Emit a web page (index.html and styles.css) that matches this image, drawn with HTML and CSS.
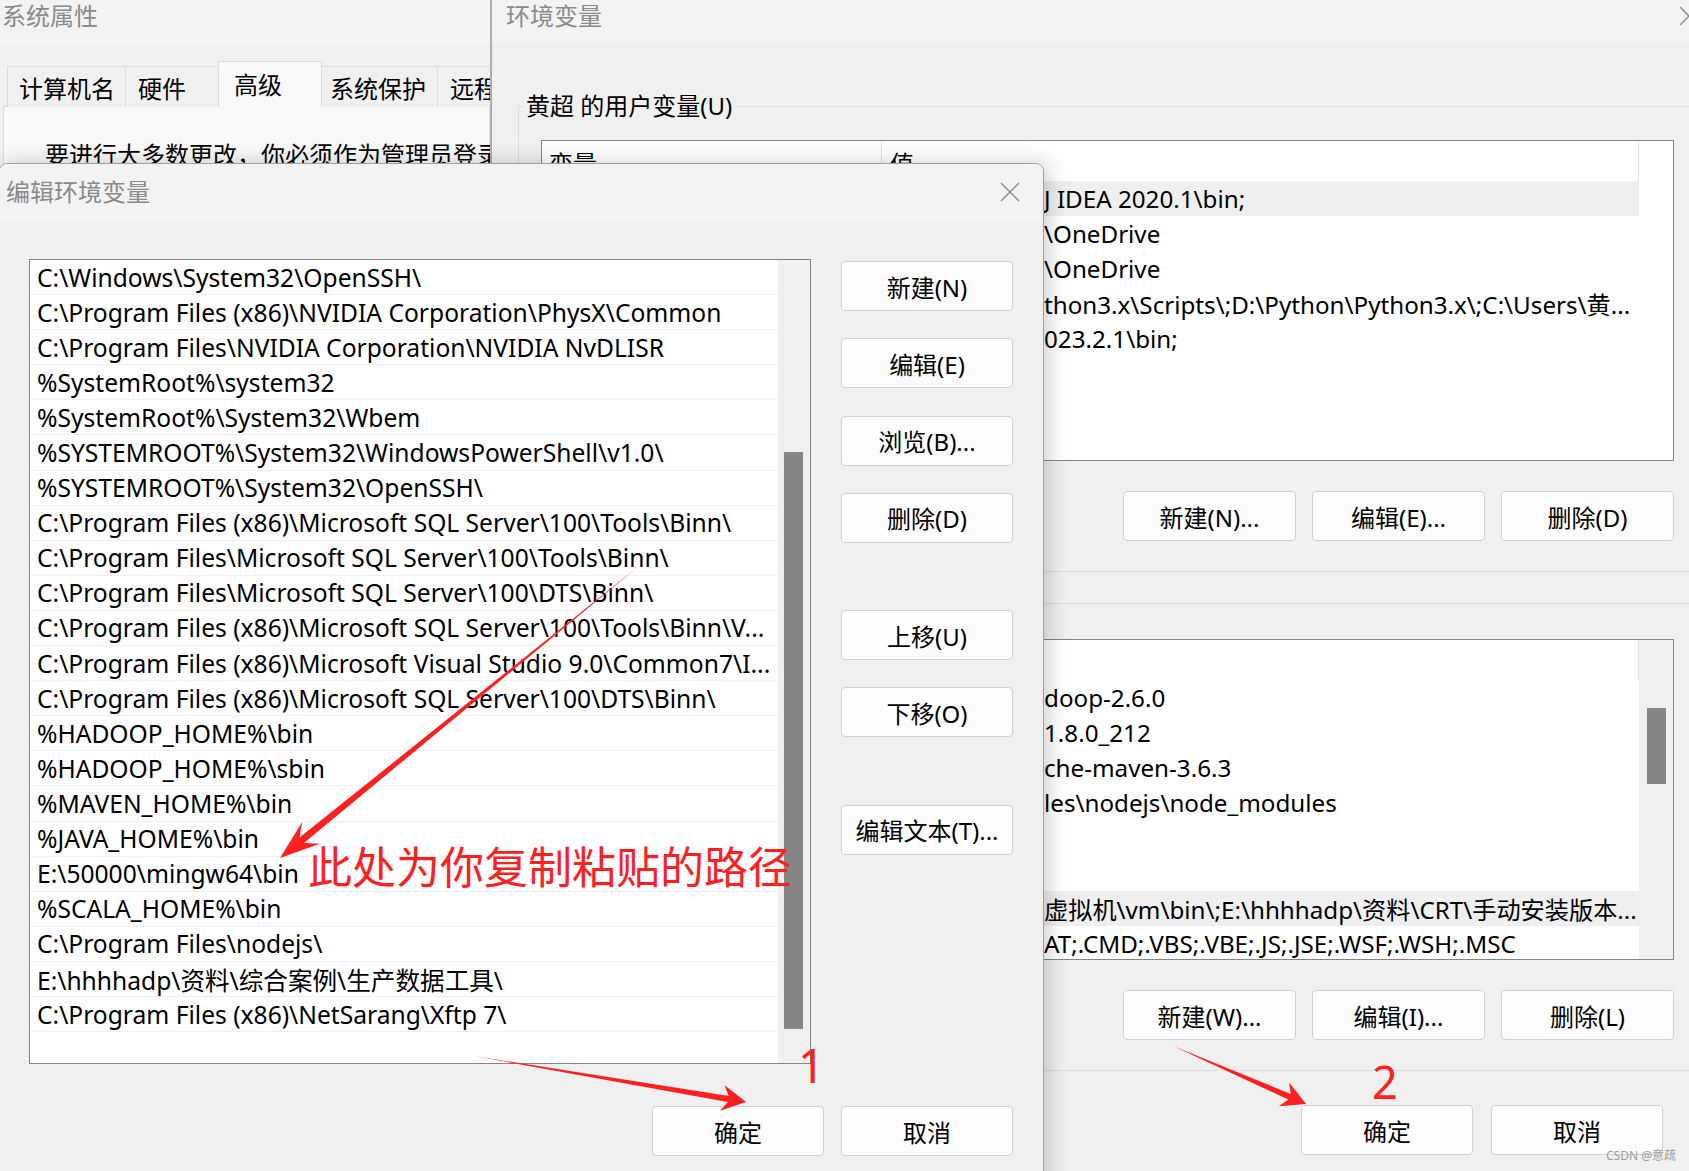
FILE: index.html
```html
<!DOCTYPE html>
<html lang="zh-CN">
<head>
<meta charset="utf-8">
<title>编辑环境变量</title>
<link rel="stylesheet" href="styles.css">
</head>
<body>
<div class="desk">

  <section class="win sys">
    <header class="titlebar"><span class="title">系统属性</span></header>
    <div class="tabs">
      <div class="tab t1">计算机名</div>
      <div class="tab t2">硬件</div>
      <div class="tab t3 active">高级</div>
      <div class="tab t4">系统保护</div>
      <div class="tab t5">远程</div>
    </div>
    <div class="tabpanel"><p class="note">要进行大多数更改，你必须作为管理员登录。</p></div>
  </section>

  <section class="win env">
    <header class="titlebar">
      <span class="title">环境变量</span>
      <span class="close"><svg width="20" height="20" viewBox="0 0 20 20"><path d="M1 1L19 19M19 1L1 19" stroke="#8a8a8a" stroke-width="1.4" fill="none"/></svg></span>
    </header>
    <div class="env-body">
      <fieldset class="group g1">
        <legend>黄超 的用户变量(U)</legend>
        <div class="listview lv1">
          <div class="lv-main">
            <div class="lv-head"><span class="col-name">变量</span><span class="col-head">值</span></div>
            <div class="lv-row sel"><span class="col-name">IDEA</span><span class="col-val">J IDEA 2020.1\bin;</span></div>
            <div class="lv-row"><span class="col-name">OneDrive</span><span class="col-val">\OneDrive</span></div>
            <div class="lv-row"><span class="col-name">OneDriveConsumer</span><span class="col-val">\OneDrive</span></div>
            <div class="lv-row"><span class="col-name">Path</span><span class="col-val">thon3.x\Scripts\;D:\Python\Python3.x\;C:\Users\黄...</span></div>
            <div class="lv-row"><span class="col-name">PyCharm</span><span class="col-val">023.2.1\bin;</span></div>
          </div>
          <div class="lv-side"></div>
        </div>
        <div class="btnrow">
          <button class="btn">新建(N)...</button>
          <button class="btn">编辑(E)...</button>
          <button class="btn">删除(D)</button>
        </div>
      </fieldset>

      <fieldset class="group g2">
        <legend>系统变量(S)</legend>
        <div class="listview lv2">
          <div class="lv-main">
            <div class="lv-head"><span class="col-name">变量</span><span class="col-head">值</span></div>
            <div class="lv-row"><span class="col-name">HADOOP_HOME</span><span class="col-val">doop-2.6.0</span></div>
            <div class="lv-row"><span class="col-name">JAVA_HOME</span><span class="col-val">1.8.0_212</span></div>
            <div class="lv-row"><span class="col-name">MAVEN_HOME</span><span class="col-val">che-maven-3.6.3</span></div>
            <div class="lv-row"><span class="col-name">NODE_PATH</span><span class="col-val">les\nodejs\node_modules</span></div>
            <div class="lv-row"><span class="col-name">NUMBER_OF_PROCESSORS</span><span class="col-val"></span></div>
            <div class="lv-row"><span class="col-name">OS</span><span class="col-val"></span></div>
            <div class="lv-row sel"><span class="col-name">Path</span><span class="col-val">虚拟机\vm\bin\;E:\hhhhadp\资料\CRT\手动安装版本...</span></div>
            <div class="lv-row"><span class="col-name">PATHEXT</span><span class="col-val">AT;.CMD;.VBS;.VBE;.JS;.JSE;.WSF;.WSH;.MSC</span></div>
          </div>
          <div class="lv-side track"><div class="thumb"></div></div>
        </div>
        <div class="btnrow">
          <button class="btn">新建(W)...</button>
          <button class="btn">编辑(I)...</button>
          <button class="btn">删除(L)</button>
        </div>
      </fieldset>

      <div class="foot env-foot">
        <button class="btn">确定</button>
        <button class="btn">取消</button>
      </div>
    </div>
  </section>

  <section class="win edit">
    <header class="titlebar">
      <span class="title">编辑环境变量</span>
      <span class="close"><svg width="20" height="20" viewBox="0 0 20 20"><path d="M1 1L19 19M19 1L1 19" stroke="#8a8a8a" stroke-width="1.4" fill="none"/></svg></span>
    </header>
    <div class="edit-body">
      <div class="edit-main">
        <div class="pathlist">
          <div class="rows">
            <div class="prow">C:\Windows\System32\OpenSSH\</div>
            <div class="prow">C:\Program Files (x86)\NVIDIA Corporation\PhysX\Common</div>
            <div class="prow">C:\Program Files\NVIDIA Corporation\NVIDIA NvDLISR</div>
            <div class="prow">%SystemRoot%\system32</div>
            <div class="prow">%SystemRoot%\System32\Wbem</div>
            <div class="prow">%SYSTEMROOT%\System32\WindowsPowerShell\v1.0\</div>
            <div class="prow">%SYSTEMROOT%\System32\OpenSSH\</div>
            <div class="prow">C:\Program Files (x86)\Microsoft SQL Server\100\Tools\Binn\</div>
            <div class="prow">C:\Program Files\Microsoft SQL Server\100\Tools\Binn\</div>
            <div class="prow">C:\Program Files\Microsoft SQL Server\100\DTS\Binn\</div>
            <div class="prow">C:\Program Files (x86)\Microsoft SQL Server\100\Tools\Binn\V...</div>
            <div class="prow">C:\Program Files (x86)\Microsoft Visual Studio 9.0\Common7\I...</div>
            <div class="prow">C:\Program Files (x86)\Microsoft SQL Server\100\DTS\Binn\</div>
            <div class="prow">%HADOOP_HOME%\bin</div>
            <div class="prow">%HADOOP_HOME%\sbin</div>
            <div class="prow">%MAVEN_HOME%\bin</div>
            <div class="prow">%JAVA_HOME%\bin</div>
            <div class="prow">E:\50000\mingw64\bin</div>
            <div class="prow">%SCALA_HOME%\bin</div>
            <div class="prow">C:\Program Files\nodejs\</div>
            <div class="prow">E:\hhhhadp\资料\综合案例\生产数据工具\</div>
            <div class="prow">C:\Program Files (x86)\NetSarang\Xftp 7\</div>
          </div>
          <div class="ptrack"><div class="pthumb"></div></div>
        </div>
        <div class="btncol">
          <button class="btn">新建(N)</button>
          <button class="btn">编辑(E)</button>
          <button class="btn">浏览(B)...</button>
          <button class="btn">删除(D)</button>
          <button class="btn sep">上移(U)</button>
          <button class="btn">下移(O)</button>
          <button class="btn sep">编辑文本(T)...</button>
        </div>
      </div>
      <div class="foot edit-foot">
        <button class="btn">确定</button>
        <button class="btn">取消</button>
      </div>
    </div>
  </section>

  <svg class="annot" width="1689" height="1171" viewBox="0 0 1689 1171">
    <polygon fill="#fe2020" points="640,565 303.9,843 319.8,843.7 280,858 302.2,821.9 299.5,837.6"/>
    <polygon fill="#fe2020" points="474,1056 727.8,1102 720.1,1110.8 746,1102 724.5,1085.2 728.8,1096"/>
    <polygon fill="#fe2020" points="1173,1046 1288.3,1099.5 1278.8,1106.3 1306,1104 1289.2,1082.5 1290.7,1094"/>
  </svg>
  <div class="annot-text">此处为你复制粘贴的路径</div>
  <div class="num n1">1</div>
  <div class="num n2">2</div>
  <div class="wm">CSDN @意疏</div>
</div>
</body>
</html>
```

FILE: styles.css
```css
* { box-sizing: border-box; }
html, body { margin: 0; padding: 0; }
body {
  width: 1689px;
  height: 1171px;
  overflow: hidden;
  background: #f0f0f0;
  font-family: "Noto Sans", "Noto Sans CJK SC", sans-serif;
  font-size: 24px;
  color: #000;
}
.desk { position: relative; width: 1689px; height: 1171px; overflow: hidden; }

.win { position: absolute; background: #f0f0f0; overflow: hidden; }
.titlebar { display: flex; align-items: center; background: #f3f3f3; color: #8a8a8a; white-space: nowrap; }
.title { font-size: 24px; line-height: 30px; }
.close { display: flex; align-items: center; justify-content: center; margin-left: auto; }

/* ---------- 系统属性 ---------- */
.sys { left: 0; top: 0; width: 491px; height: 1171px; border-right: 1px solid #b4b4b4; }
.sys .titlebar { height: 44px; padding: 0 0 12px 2px; }
.tabs { display: flex; align-items: flex-end; height: 45px; margin-top: 18px; padding-left: 7px; }
.tab {
  height: 41px; display: flex; align-items: center;
  background: #f0f0f0; border: 1px solid #dadada; border-bottom: none;
  margin-right: -1px; white-space: nowrap; flex: none;
}
.tab.active { height: 46px; background: #f9f9f9; position: relative; z-index: 1; padding-bottom: 2px; }
.t1 { width: 119px; padding-left: 11px; }
.t2 { width: 94px; padding-left: 12px; }
.t3 { width: 104px; padding-left: 15px; }
.t4 { width: 117px; padding-left: 8px; }
.t5 { width: 80px; padding-left: 12px; }
.tabpanel { margin: -1px 0 0 3px; height: 900px; background: #f9f9f9; border: 1px solid #dadada; padding: 32px 0 0 41px; }
.note { margin: 0; white-space: nowrap; line-height: 32px; }

/* ---------- 环境变量 ---------- */
.env { left: 491px; top: 0; width: 1218px; height: 1171px; border-left: 1px solid #a8a8a8; }
.env .titlebar { height: 43px; padding: 0 0 12px 14px; }
.env .close { width: 40px; height: 30px; }
.env-body { display: flex; flex-direction: column; }
.group {
  margin: 47px 12px 0 26px; padding: 18px 22px 30px 22px;
  border: 1px solid #dcdcdc; min-width: 0;
}
.group legend { padding: 0 3px; margin-left: -18px; line-height: 32px; font-size: 24px; }
.g2 { margin-top: 15px; padding-top: 20px; }

.listview { display: flex; width: 1133px; height: 321px; border: 1px solid #848484; background: #fff; }
.lv-main { width: 1097px; flex: none; overflow: hidden; }
.lv-side { flex: 1; }
.lv-side.track { background: #f0f0f0; padding: 68px 0 0 8px; }
.thumb { width: 19px; height: 76px; background: #858585; }
.lv-head { display: flex; height: 40px; align-items: center; border-right: 1px solid #e3e3e3; }
.lv-head .col-name { border-right: 1px solid #e3e3e3; height: 40px; padding-top: 2px; }
.col-name { width: 340px; flex: none; padding-left: 7px; white-space: nowrap; overflow: hidden; display: flex; align-items: center; }
.col-head { padding-left: 8px; padding-top: 2px; }
.lv-row { display: flex; height: 35.1px; align-items: center; white-space: nowrap; font-size: 24.2px; }
.lv-row.sel { background: #efefef; }
.col-val { padding-left: 162px; white-space: nowrap; }

.btnrow { display: flex; justify-content: flex-end; gap: 16px; margin-top: 30px; width: 1133px; }
.btn {
  font: inherit; font-size: 24px; color: #000;
  width: 173px; height: 50px; padding: 0;
  background: #fdfdfd; border: 1px solid #d0d0d0; border-radius: 4px;
  white-space: nowrap; flex: none;
}
.foot { display: flex; justify-content: flex-end; }
.env-foot { margin-top: 34px; padding-right: 46px; gap: 18px; }
.env-foot .btn { width: 172px; }

/* ---------- 编辑环境变量 ---------- */
.edit {
  left: -1px; top: 163px; width: 1045px; height: 1040px;
  border: 1px solid #a0a0a0; border-radius: 8px 8px 0 0;
  box-shadow: 4px 0 22px rgba(0, 0, 0, 0.20);
  z-index: 5;
}
.edit .titlebar { height: 57px; padding-left: 6px; padding-bottom: 2px; }
.edit .close { width: 66px; height: 55px; }
.edit-body { padding: 38px 30px 0 29px; }
.edit-main { display: flex; gap: 30px; }
.pathlist { display: flex; width: 782px; height: 805px; border: 1px solid #848484; background: #fff; flex: none; }
.rows { width: 748px; flex: none; }
.prow {
  height: 35.1px; padding-left: 7px; display: flex; align-items: center;
  border-bottom: 1px solid #efefef; white-space: nowrap; overflow: hidden;
  font-size: 24.6px;
}
.ptrack { flex: 1; background: #f0f0f0; padding: 192px 0 0 6px; }
.pthumb { width: 19px; height: 577px; background: #858585; }
.btncol { display: flex; flex-direction: column; gap: 27.3px; padding-top: 2px; }
.btncol .btn { width: 172px; }
.btncol .btn.sep { margin-top: 40px; }
.edit-foot { margin-top: 42px; gap: 17px; }
.edit-foot .btn { width: 172px; }

/* ---------- annotations ---------- */
.annot { position: absolute; left: 0; top: 0; z-index: 10; pointer-events: none; }
.annot-text {
  position: absolute; left: 308px; top: 843px; z-index: 10;
  font-family: "Noto Sans CJK SC", sans-serif; font-size: 44px; line-height: 44px;
  color: #fe2020; white-space: nowrap;
}
.num {
  position: absolute; z-index: 10; color: #fe2020;
  font-family: "Noto Sans", sans-serif; line-height: 1;
}
.n1 { left: 798px; top: 1042px; font-size: 47px; }
.n2 { left: 1372px; top: 1059px; font-size: 45px; }
.wm {
  position: absolute; left: 1606px; top: 1149px; z-index: 10;
  font-family: "Noto Sans", "Noto Sans CJK SC", sans-serif; font-size: 12px; line-height: 14px;
  color: rgba(140, 140, 140, 0.85); white-space: nowrap;
}
```
